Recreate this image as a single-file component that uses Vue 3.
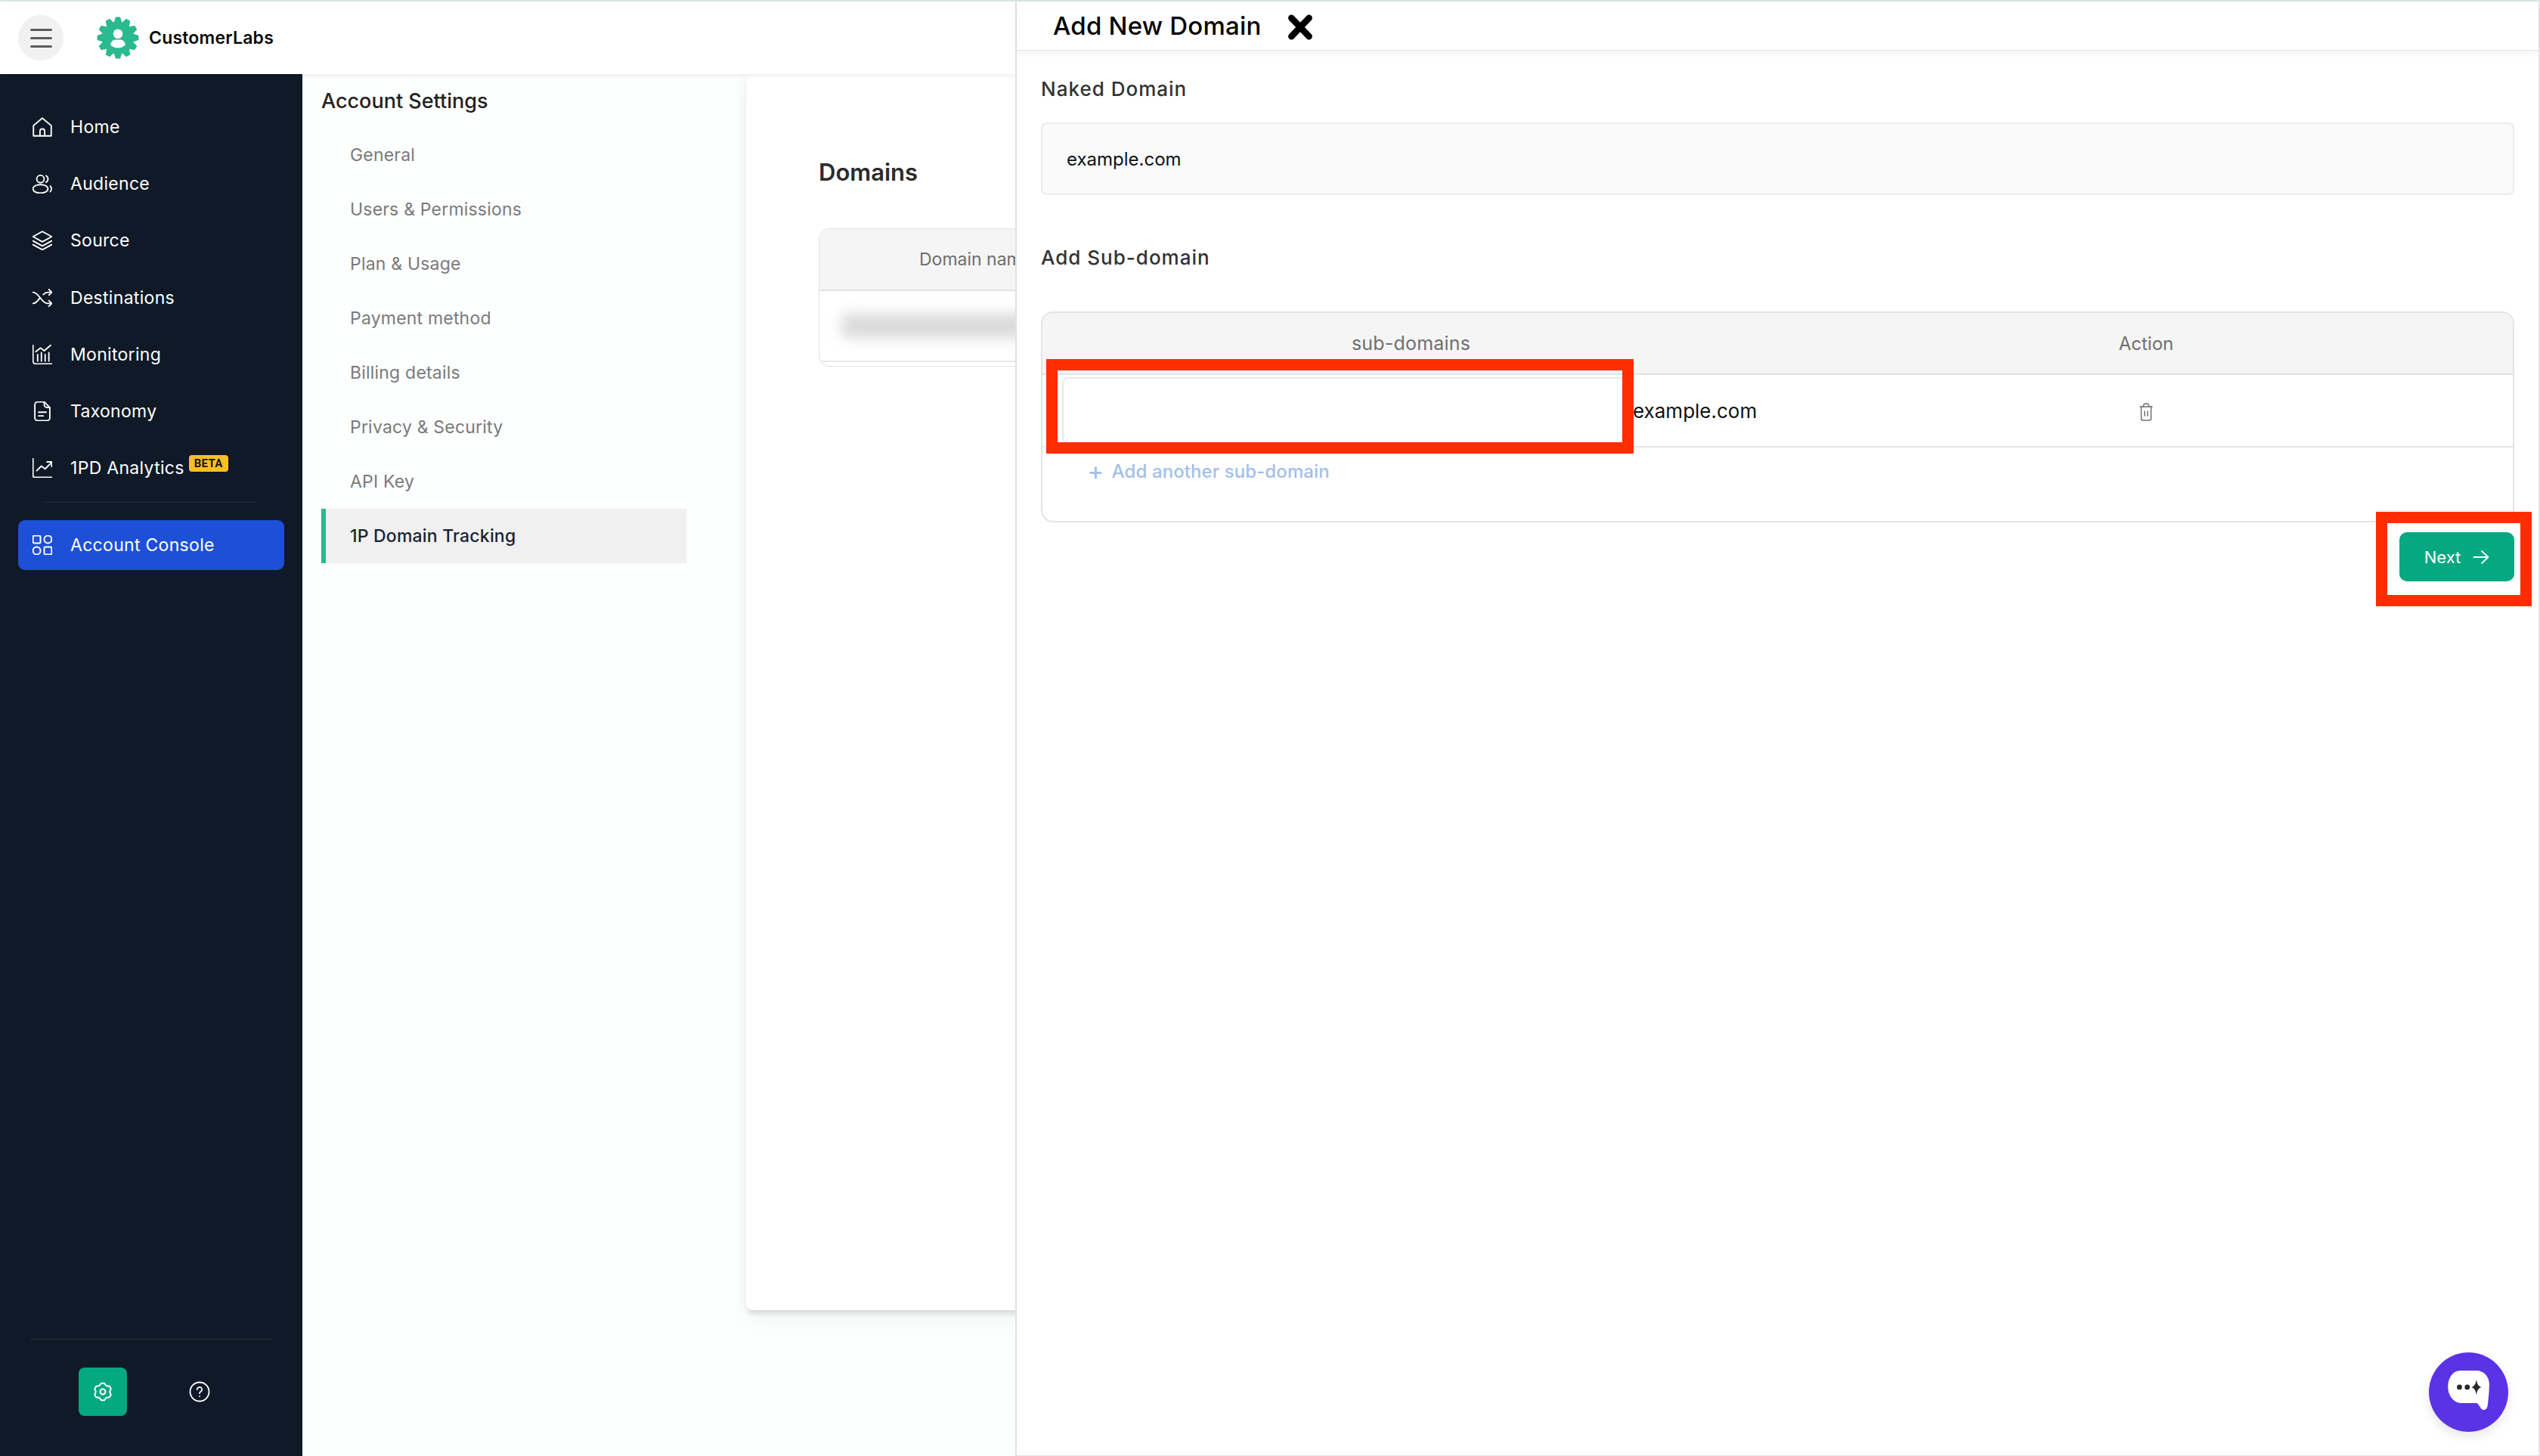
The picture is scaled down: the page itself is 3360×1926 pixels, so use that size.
<script setup>
const navItems = [
  { label: 'Home', paths: ['M2.500 21.500V10.500L12 2.500l9.500 8v11z', 'M9.500 21.500v-5a2.500 2.500 0 0 1 5 0v5'] },
  { label: 'Audience', paths: ['M10 3a4 4 0 1 0 0 8 4 4 0 0 0 0-8z', 'M10 13c-4.500 0-8 1.800-8 4.500S5.500 22 10 22s8-1.800 8-4.500S14.500 13 10 13z', 'M16 3.500a4 4 0 0 1 0 7', 'M20.500 14.500a4.500 4.500 0 0 1 0 6'] },
  { label: 'Source', paths: ['M12 2.500 22 8l-10 5.500L2 8z', 'M2 12.500 12 18l10-5.500', 'M2 16.500 12 22l10-5.500'] },
  { label: 'Destinations', paths: ['M2 6c6.500 0 9 12 15.500 12H22', 'M2 18c3 0 5-2.500 7-5.500M13 8.500c1.500-1.500 3-2.500 5-2.500h4', 'M19 3l3 3-3 3', 'M19 15l3 3-3 3'] },
  { label: 'Monitoring', paths: ['M2 2v17a3 3 0 0 0 3 3h17', 'M7 19v-7M11 19v-9M15 19v-7M19 19v-9', 'M5 9l5-4 4 3 7-6'] },
  { label: 'Taxonomy', paths: ['M14 2H7a3 3 0 0 0-3 3v14a3 3 0 0 0 3 3h10a3 3 0 0 0 3-3V8z', 'M14 2v3a3 3 0 0 0 3 3h3', 'M8 13h8M8 17h5'] },
  { label: '1PD Analytics', beta: true, paths: ['M2 2v18a2 2 0 0 0 2 2h18', 'M6 15l5-5 4 3 7-7', 'M17 5.500h5v5'] },
];

const settingsItems = ['General', 'Users & Permissions', 'Plan & Usage', 'Payment method', 'Billing details', 'Privacy & Security', 'API Key'];

// toothed outline, used for the logo and the settings button
const gearShape = (c, teeth, rIn, rOut, wIn, wOut) => {
  const pts = [];
  for (let i = 0; i < teeth; i++) {
    const a = (i / teeth) * Math.PI * 2 - Math.PI / 2;
    const w = Math.PI / teeth;
    [[rIn, -w * wIn], [rOut, -w * wOut], [rOut, w * wOut], [rIn, w * wIn]].forEach(([r, d]) => {
      pts.push(`${(c + r * Math.cos(a + d)).toFixed(2)} ${(c + r * Math.sin(a + d)).toFixed(2)}`);
    });
  }
  return 'M' + pts.join('L') + 'z';
};

const logoGear = gearShape(30, 12, 22, 28.5, 0.95, 0.42);
const buttonGear = gearShape(12, 6, 8.6, 10.6, 0.9, 0.32);
</script>

<template>
  <div class="page">
    <div class="top-strip"></div>
    <header class="topbar">
      <button class="burger"><span></span><span></span><span></span></button>
      <svg class="logo" viewBox="0 0 60 60">
        <path :d="logoGear" fill="#2bb98f" />
        <circle cx="30" cy="30" r="17.5" fill="#2bb98f" />
        <circle cx="30" cy="24.5" r="6.5" fill="#fff" />
        <path d="M20 40c0-4.500 3-7 6-7.500h8c3 .5 6 3 6 7.500a15 15 0 0 1-20 0z" fill="#fff" />
      </svg>
      <span class="brand">CustomerLabs</span>
    </header>

    <div class="body-row">
      <aside class="sidebar">
        <nav class="nav">
          <a v-for="item in navItems" :key="item.label" class="nav-item">
            <svg class="nav-icon" viewBox="1.5 1.5 21 21" fill="none" stroke="#fff" stroke-width="1.5" stroke-linecap="round" stroke-linejoin="round">
              <path v-for="d in item.paths" :key="d" :d="d" />
            </svg>
            <span>{{ item.label }}</span>
            <b v-if="item.beta" class="beta">BETA</b>
          </a>
        </nav>
        <div class="nav-divider"></div>
        <a class="nav-active">
          <svg class="nav-icon" viewBox="1.5 1.5 21 21" fill="none" stroke="#fff" stroke-width="1.6">
            <rect x="2" y="2" width="8" height="8" rx="1.5" />
            <circle cx="18" cy="6" r="4" />
            <circle cx="6" cy="18" r="4" />
            <rect x="14" y="14" width="8" height="8" rx="1.5" />
          </svg>
          <span>Account Console</span>
        </a>
        <div class="side-bottom">
          <div class="bottom-divider"></div>
          <div class="bottom-icons">
            <div class="gear-btn">
              <svg width="26" height="26" viewBox="0 0 24 24" fill="none" stroke="#fff" stroke-width="1.8" stroke-linejoin="round">
                <path :d="buttonGear" />
                <circle cx="12" cy="12" r="3.2" />
              </svg>
            </div>
            <div class="help">
              <svg width="28" height="28" viewBox="0 0 28 28" fill="none" stroke="#fff" stroke-width="1.8" stroke-linecap="round">
                <circle cx="14" cy="14" r="12.5" />
                <path d="M10.800 11a3.200 3.200 0 1 1 4.800 2.800c-1 .6-1.600 1.200-1.600 2.400" />
                <path d="M14 20v.1" />
              </svg>
            </div>
          </div>
        </div>
      </aside>

      <section class="settings-nav">
        <h3>Account Settings</h3>
        <a v-for="s in settingsItems" :key="s" class="settings-item">{{ s }}</a>
        <a class="settings-item current">1P Domain Tracking</a>
      </section>

      <main class="content">
        <div class="card">
          <h2>Domains</h2>
          <div class="domain-table">
            <div class="domain-head">Domain name</div>
            <div class="domain-row"><i class="smudge"></i></div>
          </div>
        </div>
      </main>
    </div>

    <!-- drawer over the page -->
    <aside class="drawer">
      <div class="drawer-head">
        <span class="drawer-title">Add New Domain</span>
        <svg class="close" viewBox="0 0 32 32" stroke="#000" stroke-width="8" stroke-linecap="round">
          <path d="M5 4.500l22 23M27 4.500l-22 23" />
        </svg>
      </div>
      <div class="drawer-body">
        <div class="field-label">Naked Domain</div>
        <div class="naked-input">example.com</div>
        <div class="field-label sub-label">Add Sub-domain</div>

        <div class="sub-table">
          <div class="sub-head">
            <div class="col-main">sub-domains</div>
            <div class="col-action">Action</div>
          </div>
          <div class="sub-row">
            <div class="col-main row-main">
              <div class="sub-input"></div>
              <span class="suffix">example.com</span>
            </div>
            <div class="col-action">
              <svg class="trash" width="18" height="24" viewBox="0 0 18 24" fill="none" stroke="#6f6f6f" stroke-width="1.5" stroke-linecap="round" stroke-linejoin="round">
                <path d="M1 5h16" />
                <path d="M5.500 5V3.500A2.500 2.500 0 0 1 8 1h2a2.500 2.500 0 0 1 2.500 2.500V5" />
                <path d="M2.500 5v15.500A2.500 2.500 0 0 0 5 23h8a2.500 2.500 0 0 0 2.500-2.500V5" />
                <path d="M7 11v6M11 11v6" />
              </svg>
            </div>
          </div>
          <div class="add-row">
            <span class="add-plus">+</span>
            <span>Add another sub-domain</span>
          </div>
        </div>

        <div class="next-wrap">
          <button class="next">
            Next
            <svg width="22" height="20" viewBox="0 0 22 20" fill="none" stroke="#fff" stroke-width="1.8" stroke-linecap="round" stroke-linejoin="round">
              <path d="M1.500 10h19M12 2l8.500 8-8.500 8" />
            </svg>
          </button>
        </div>
      </div>

      <!-- red annotation frames -->
      <div class="mark mark-input"></div>
      <div class="mark mark-next"></div>

      <button class="chat">
        <svg width="58" height="52" viewBox="0 0 62 58">
          <path d="M18 0H42C53 0 61 9 61 20C61 30 60 40 58.500 52C58 56 56 58 53 58C50 58 48.500 56 47 53L43 48H20C8 48 0 36 0 24C0 10 8 0 18 0z" fill="#fff" />
          <circle cx="17" cy="24.500" r="3.800" fill="#2a2a2a" />
          <circle cx="28.500" cy="24.500" r="3.800" fill="#2a2a2a" />
          <path d="M42 13c1 7 3 10 7.500 11.500-4.500 1.500-6.500 4.500-7.500 11.500-1-7-3-10-7.500-11.500 4.500-1.500 6.500-4.500 7.500-11.500z" fill="#2a2a2a" />
        </svg>
      </button>
    </aside>
  </div>
</template>

<style>
html, body { margin: 0; padding: 0; background: #fff; }
</style>

<style scoped>
.page {
  position: relative;
  width: 3360px;
  height: 1926px;
  overflow: hidden;
  display: flex;
  flex-direction: column;
  background: #fff;
  font-family: Inter, "Open Sans", sans-serif;
}

.top-strip { height: 2px; background: #dbe8e4; flex: none; }

.topbar {
  height: 96px;
  flex: none;
  display: flex;
  align-items: center;
  padding-left: 24px;
  background: #fff;
  box-shadow: 0 2px 6px rgba(0, 0, 0, 0.08);
  position: relative;
  z-index: 1;
}
.burger {
  width: 60px; height: 60px; border-radius: 50%; border: none; background: #f1f1f1;
  display: flex; flex-direction: column; justify-content: center; align-items: center; gap: 8px;
  padding: 0;
}
.burger span { width: 29px; height: 3px; border-radius: 2px; background: #5c5c5c; }
.logo { width: 58px; height: 58px; margin-left: 43px; }
.brand { margin-left: 12px; font-size: 23px; font-weight: 600; color: #0b0b0b; letter-spacing: 0.2px; }

.body-row { flex: 1; display: flex; min-height: 0; }

.sidebar {
  width: 400px; flex: none; background: #101927; display: flex; flex-direction: column;
  padding-top: 32px; box-sizing: border-box;
}
.nav { display: flex; flex-direction: column; }
.nav-item {
  height: 75.3px; display: flex; align-items: center; padding-left: 43px;
  color: #fff; font-size: 23px; letter-spacing: 0.3px;
}
.nav-icon { width: 26px; height: 26px; margin-right: 24px; flex: none; }
.beta {
  margin-left: 6px; margin-top: -13px; padding: 1px 7px; border-radius: 4px; background: #fbbf24; color: #1a1408;
  font-size: 15px; font-weight: 700; line-height: 20px; font-family: Roboto, sans-serif;
}
.nav-divider { height: 1px; background: #232c3b; margin: 7px 60px 0 59px; }
.nav-active {
  height: 66px; margin: 23px 24px 0; border-radius: 9px; background: #1e4fd8; color: #fff;
  display: flex; align-items: center; padding-left: 19px; font-size: 23px; letter-spacing: 0.3px;
}
.side-bottom { margin-top: auto; padding-bottom: 53px; }
.bottom-divider { height: 1px; background: #2a3342; margin: 0 40px; }
.bottom-icons { display: flex; align-items: center; margin: 37px 0 0 104px; }
.gear-btn {
  width: 64px; height: 64px; border-radius: 8px; background: #04a97f;
  display: flex; align-items: center; justify-content: center;
}
.help { display: flex; margin-left: 82px; }

.settings-nav { width: 587px; flex: none; padding: 0 0 0 25px; box-sizing: border-box; background: #fdfefe; }
.settings-nav h3 { margin: 22px 0 0; height: 28px; line-height: 28px; font-size: 27px; font-weight: 500; color: #222; }
.settings-item {
  display: flex; align-items: center; height: 72px; width: 483px; padding-left: 38px; box-sizing: border-box;
  font-size: 23px; color: #7a7a7a; letter-spacing: 0.2px;
}
.settings-item:first-of-type { margin-top: 21px; }
.settings-item.current {
  background: #f0f0f1; color: #1c2232; font-weight: 500; border-left: 6px solid #2bb98f; padding-left: 32px;
}

.content { flex: 1; min-width: 0; background: #fdfefe; }
.card {
  width: 1400px; height: 1635px; background: #fff; padding: 112px 0 0 96px; box-sizing: border-box; border-radius: 8px;
  box-shadow: 0 7px 6px -2px rgba(0, 0, 0, 0.11), 0 16px 30px rgba(0, 0, 0, 0.04), -6px 0 14px rgba(0, 0, 0, 0.025);
}
.card h2 { margin: 0; font-size: 31px; line-height: 36px; font-weight: 600; color: #2b2b2b; }
.domain-table { margin-top: 56px; width: 1200px; height: 181px; border: 1px solid #e2e2e2; border-radius: 14px; overflow: hidden; }
.domain-head {
  height: 82px; display: flex; align-items: center; padding-left: 132px; background: #f5f5f5;
  border-bottom: 2px solid #e2e2e2; font-size: 23px; color: #6d6d6d; box-sizing: border-box;
}
.domain-row { height: 94px; display: flex; align-items: center; padding: 0 0 0 30px; border-bottom: 2px solid #e8e8e8; box-sizing: border-box; }
.smudge { display: block; width: 400px; height: 32px; background: #d9d9d9; filter: blur(9px); }

.drawer {
  position: absolute; top: 2px; left: 1343px; width: 2013px; height: 1923px;
  background: #fff; border: 1px solid #e3e3e3; border-width: 0 2px 1px 2px; box-sizing: content-box;
  z-index: 2;
}
.drawer-head {
  height: 65px; display: flex; align-items: center; padding-left: 48px;
  border-bottom: 1px solid #e3e3e3; box-shadow: 0 3px 10px rgba(0, 0, 0, 0.05); box-sizing: border-box;
}
.drawer-title { font-size: 33px; font-weight: 500; color: #000; letter-spacing: 0.2px; }
.close { width: 34px; height: 34px; margin-left: 35px; margin-top: 3px; }
.drawer-body { padding: 0 32px 0 32px; }
.field-label { margin-top: 36px; font-size: 26px; line-height: 30px; font-weight: 500; color: #333; letter-spacing: 1px; }
.naked-input {
  margin-top: 29px; height: 96px; box-sizing: border-box; display: flex; align-items: center; padding-left: 32px;
  border: 2px solid #ececec; border-radius: 8px; background: #fafafa; font-size: 24px; color: #111;
}
.sub-label { margin-top: 68px; }
.sub-table {
  margin-top: 56px; height: 279px; box-sizing: border-box; border: 2px solid #e4e4e4; border-radius: 16px; overflow: hidden;
}
.sub-head { height: 82px; display: flex; background: #f5f5f5; border-bottom: 2px solid #e2e2e2; box-sizing: border-box; color: #6f6f6f; font-size: 24px; }
.sub-head > div { display: flex; align-items: center; justify-content: center; }
.sub-head .col-main { font-size: 25px; letter-spacing: 0.2px; }
.col-main { width: 975px; flex: none; }
.col-action { flex: 1; }
.sub-row { height: 96px; display: flex; border-bottom: 2px solid #e6e6e6; box-sizing: border-box; }
.row-main { display: flex; align-items: center; padding-left: 26px; box-sizing: border-box; }
.sub-input { width: 755px; height: 88px; background: #fff; border: 2px solid #e8e8e8; border-radius: 8px; box-sizing: border-box; flex: none; }
.suffix { font-size: 26px; color: #111; margin-top: 1px; }
.sub-row .col-action { display: flex; align-items: center; justify-content: center; }
.trash { margin-top: 4px; }
.add-row { display: flex; align-items: center; gap: 10px; padding: 16px 0 0 59px; color: #a3bfe8; font-size: 24px; font-weight: 500; letter-spacing: 0.1px; }
.add-plus { font-size: 34px; line-height: 30px; font-weight: 400; }
.next-wrap { display: flex; justify-content: flex-end; margin-top: 13px; }
.next {
  width: 152px; height: 65px; border: none; border-radius: 10px; background: #05a880; color: #fff;
  display: flex; align-items: center; justify-content: center; gap: 16px; font-family: Inter, sans-serif; font-size: 22px; padding: 0;
}

.mark { position: absolute; border: 15px solid #ff2d00; box-sizing: border-box; }
.mark-input { left: 39px; top: 473px; width: 777px; height: 125px; }
.mark-next { left: 1798px; top: 675px; width: 206px; height: 125px; }

.chat {
  position: absolute; left: 1868px; top: 1787px; width: 105px; height: 105px; border-radius: 50%; border: none;
  background: #5b33e6; box-shadow: 0 6px 14px rgba(0, 0, 0, 0.1); display: flex; align-items: center; justify-content: center; padding: 0 0 6px 0;
}
</style>
